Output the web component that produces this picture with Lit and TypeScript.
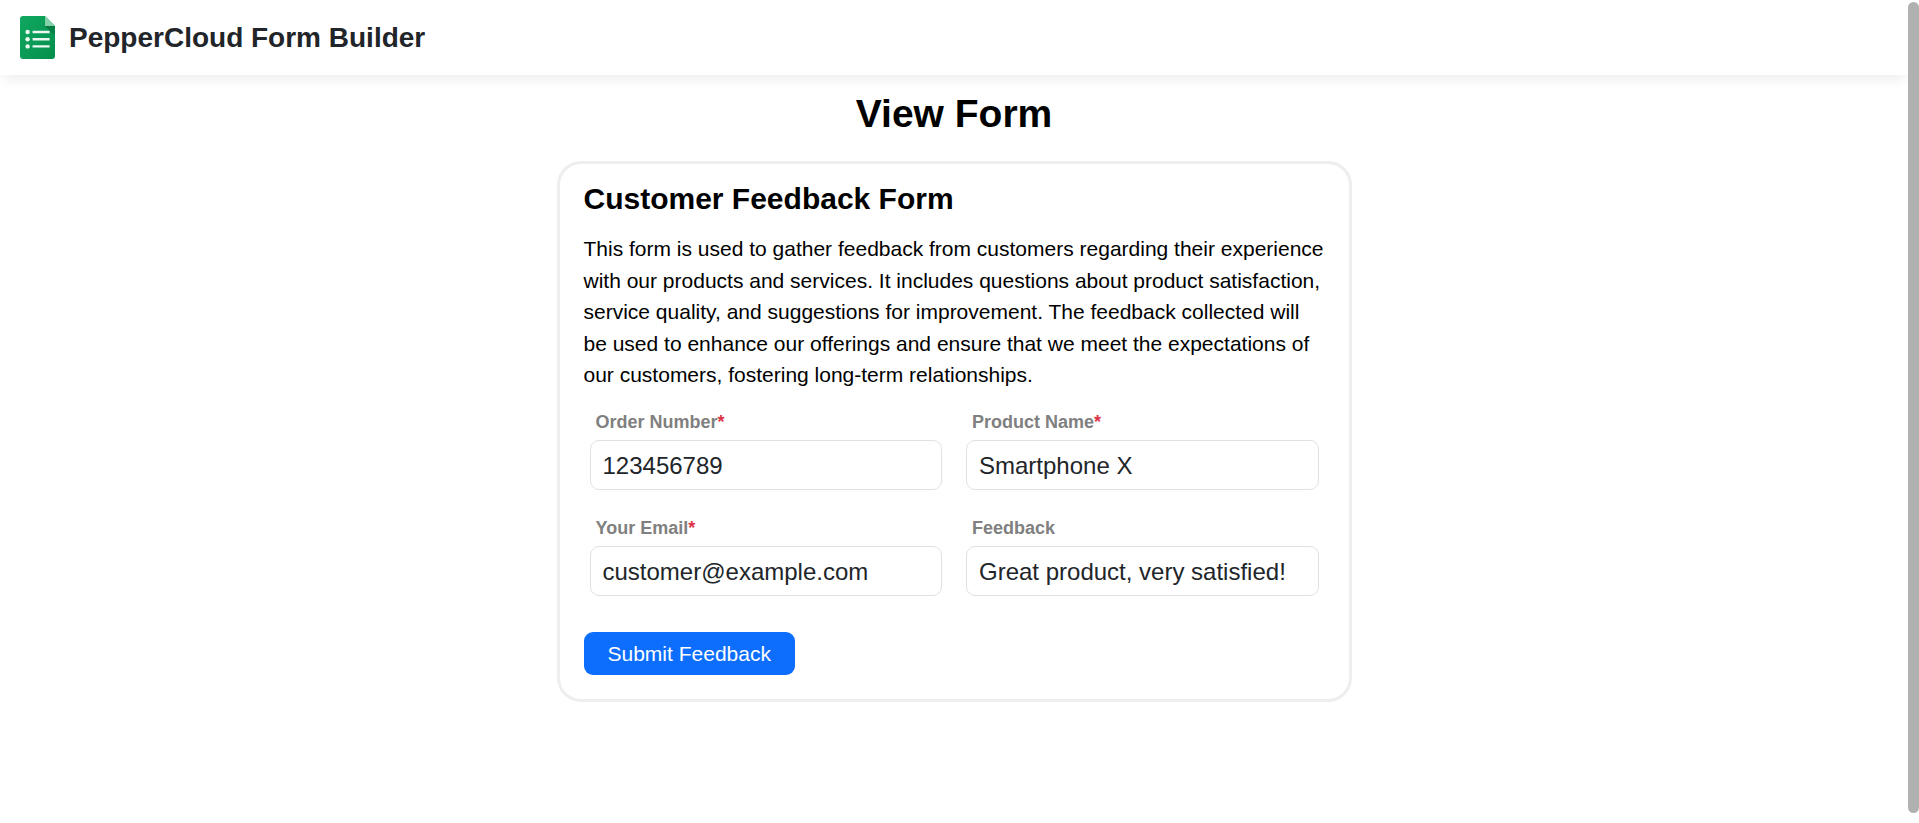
import { LitElement, html, css, nothing } from "lit";
import { customElement, property } from "lit/decorators.js";

interface Field {
  id: string;
  label: string;
  type: string;
  value: string;
  required: boolean;
}

const FIELDS: Field[] = [
  { id: "order-number", label: "Order Number", type: "text", value: "123456789", required: true },
  { id: "product-name", label: "Product Name", type: "text", value: "Smartphone X", required: true },
  { id: "email", label: "Your Email", type: "email", value: "customer@example.com", required: true },
  { id: "feedback", label: "Feedback", type: "text", value: "Great product, very satisfied!", required: false },
];

@customElement("app-header")
export class AppHeader extends LitElement {
  static styles = css`
    :host {
      display: block;
    }
    .bar {
      display: flex;
      align-items: center;
      gap: 14px;
      padding: 16px 20px;
      background: #fff;
      box-shadow: 0 8px 12px -4px rgba(0, 0, 0, 0.08);
    }
    .logo {
      display: block;
      width: 35px;
      height: 43px;
    }
    .brand {
      color: #212529;
      font-size: 28px;
      font-weight: 700;
      line-height: 40px;
      text-decoration: none;
    }
  `;

  render() {
    return html`
      <header class="bar">
        <svg class="logo" viewBox="0 0 35 43" aria-hidden="true">
          <defs>
            <linearGradient id="sheet" x1="0" y1="0" x2="1" y2="1">
              <stop offset="0" stop-color="#10a860" />
              <stop offset="1" stop-color="#048f4c" />
            </linearGradient>
            <linearGradient id="fold" x1="0" y1="0" x2="1" y2="1">
              <stop offset="0" stop-color="#05713c" />
              <stop offset="1" stop-color="#068b4a" />
            </linearGradient>
          </defs>
          <path d="M3 0H25L35 10V40a3 3 0 0 1-3 3H3a3 3 0 0 1-3-3V3a3 3 0 0 1 3-3Z" fill="url(#sheet)" />
          <path d="M25 10H35V20Z" fill="url(#fold)" />
          <path d="M25 0L35 10H25Z" fill="#84d0a9" />
          <g fill="#ecf8f1">
            <circle cx="7.600" cy="16" r="2.200" />
            <circle cx="7.600" cy="23.200" r="2.200" />
            <circle cx="7.600" cy="30.400" r="2.200" />
            <path d="M12.600 14.800h17v2.400h-17zM12.600 22h17v2.400h-17zM12.600 29.200h17v2.400h-17z" />
          </g>
        </svg>
        <a class="brand" href="#">PepperCloud Form Builder</a>
      </header>
    `;
  }
}

@customElement("form-field")
export class FormField extends LitElement {
  @property({ attribute: false }) field!: Field;

  static styles = css`
    :host {
      display: flex;
      flex-direction: column;
      gap: 4px;
      min-width: 0;
    }
    .label {
      padding-left: 6px;
      color: #808080;
      font-size: 18px;
      font-weight: 700;
      line-height: 27px;
    }
    .required {
      color: #dc3545;
    }
    .input {
      box-sizing: border-box;
      width: 100%;
      height: 50px;
      margin: 0;
      padding: 2px 12px 0;
      border: 1px solid #dee2e6;
      border-radius: 9px;
      background: #fff;
      color: #212529;
      font-family: inherit;
      font-size: 24px;
      line-height: 36px;
    }
    .input:focus-visible {
      outline: 2px solid #0d6efd;
    }
  `;

  render() {
    const { id, label, type, value, required } = this.field;
    return html`
      <label class="label" for=${id}
        >${label}${required ? html`<span class="required">*</span>` : nothing}</label
      >
      <input class="input" id=${id} name=${id} type=${type} .value=${value} ?required=${required} />
    `;
  }
}

@customElement("app-root")
export class AppRoot extends LitElement {
  static styles = css`
    :host {
      display: grid;
      grid-template-columns: minmax(0, 1fr) 11px;
      min-height: 100vh;
      background: #fff;
      color: #000;
      font-family: Helvetica, "Liberation Sans", Arial, sans-serif;
    }
    .main {
      display: flex;
      flex-direction: column;
      align-items: center;
      padding: 15px 16px;
    }
    .title {
      margin: 0 0 23px;
      font-size: 39px;
      line-height: 48px;
    }
    .card {
      box-sizing: border-box;
      width: 100%;
      max-width: 795px;
      padding: 17px 24px 24px;
      border: 3px solid #eee;
      border-radius: 24px;
    }
    .heading {
      margin: 0 0 16px;
      font-size: 30px;
      line-height: 36px;
    }
    .description {
      margin: 0;
      font-size: 21px;
      line-height: 1.5;
    }
    .fields {
      display: grid;
      grid-template-columns: repeat(2, minmax(0, 1fr));
      gap: 25px 24px;
      padding: 18px 6px 36px;
    }
    .submit {
      display: block;
      padding: 6px 24px;
      border: 0;
      border-radius: 9px;
      background: #0d6efd;
      color: #fff;
      font-family: inherit;
      font-size: 21px;
      line-height: 31px;
      cursor: pointer;
    }
    .track {
      padding: 2px 0 10px;
      display: flex;
    }
    .thumb {
      flex: 1;
      border-radius: 6px;
      background: #b1b1b1;
    }
  `;

  render() {
    return html`
      <div>
        <app-header></app-header>
        <main class="main">
          <h1 class="title">View Form</h1>
          <form class="card" @submit=${(e: Event) => e.preventDefault()}>
            <h2 class="heading">Customer Feedback Form</h2>
            <p class="description">
              This form is used to gather feedback from customers regarding their experience with our
              products and services. It includes questions about product satisfaction, service quality,
              and suggestions for improvement. The feedback collected will be used to enhance our
              offerings and ensure that we meet the expectations of our customers, fostering long-term
              relationships.
            </p>
            <div class="fields">
              ${FIELDS.map((field) => html`<form-field .field=${field}></form-field>`)}
            </div>
            <button class="submit" type="submit">Submit Feedback</button>
          </form>
        </main>
      </div>
      <div class="track" aria-hidden="true"><div class="thumb"></div></div>
    `;
  }
}
